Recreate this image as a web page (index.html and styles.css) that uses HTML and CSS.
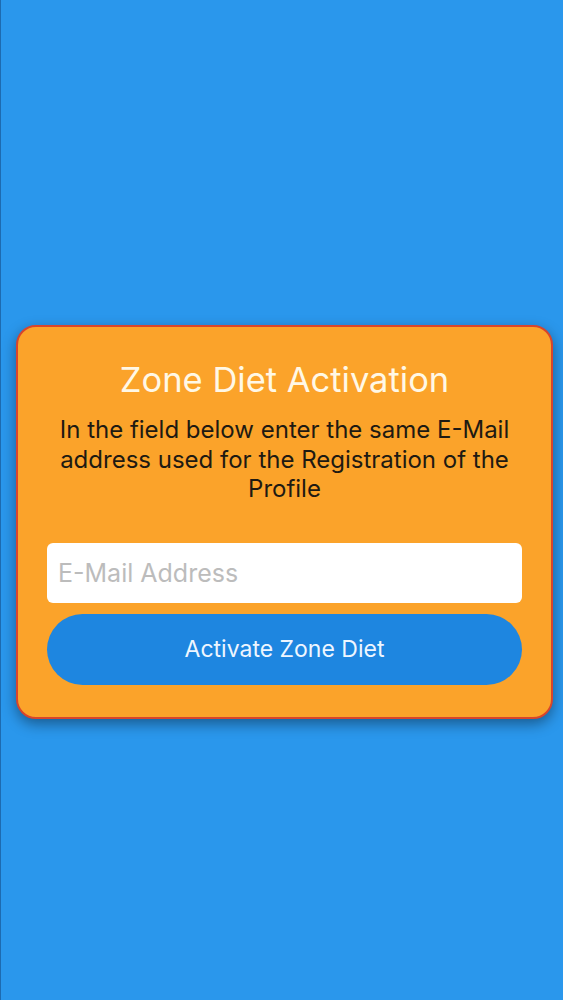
FILE: index.html
```html
<!DOCTYPE html>
<html lang="en">
<head>
    <meta charset="UTF-8">
    <meta name="viewport" content="width=device-width, initial-scale=1.0">
    <title>Zone Diet Activation</title>
    <link rel="stylesheet" href="styles.css">
</head>
<body>
    <div class="screen">
        <!-- Activation card -->
        <div class="card">
            <h1 class="card-title">Zone Diet Activation</h1>
            <p class="card-text">In the field below enter the same E-Mail address used for the Registration of the Profile</p>
            <input class="email-input" type="email" placeholder="E-Mail Address">
            <button class="activate-button">Activate Zone Diet</button>
        </div>
    </div>
</body>
</html>
```

FILE: styles.css
```css
* {
    margin: 0;
    padding: 0;
    box-sizing: border-box;
}

body {
    font-family: Inter, "Noto Sans", sans-serif;
    background: #2a97ec;
    width: 563px;
    height: 1000px;
    overflow: hidden;
}

.screen {
    height: 100%;
    padding: 325px 10px 0 15px;
    border-left: 1px solid #1d6bb0;
}

/* Activation card */
.card {
    background: #fba32a;
    border: 2px solid #d8452c;
    border-radius: 20px;
    box-shadow: 0 5px 14px rgba(0, 0, 0, 0.4);
    padding: 34px 29px 32px;
    text-align: center;
}

.card-title {
    color: #fff8e6;
    font-size: 34.5px;
    font-weight: 400;
    line-height: 38px;
}

.card-text {
    margin-top: 16px;
    padding: 0 6px;
    color: #1e1a12;
    font-size: 24px;
    line-height: 29.5px;
}

.email-input {
    display: block;
    width: 100%;
    height: 60px;
    margin-top: 39px;
    padding: 0 11px;
    border: none;
    border-radius: 6px;
    background: #fff;
    font-family: inherit;
    font-size: 25px;
    outline: none;
}

.email-input::placeholder {
    color: #bcbcbc;
}

.activate-button {
    display: block;
    width: 100%;
    height: 71px;
    margin-top: 11px;
    border: none;
    border-radius: 36px;
    background: #1e86e0;
    color: #eef6ff;
    font-family: inherit;
    font-size: 23px;
}
```
